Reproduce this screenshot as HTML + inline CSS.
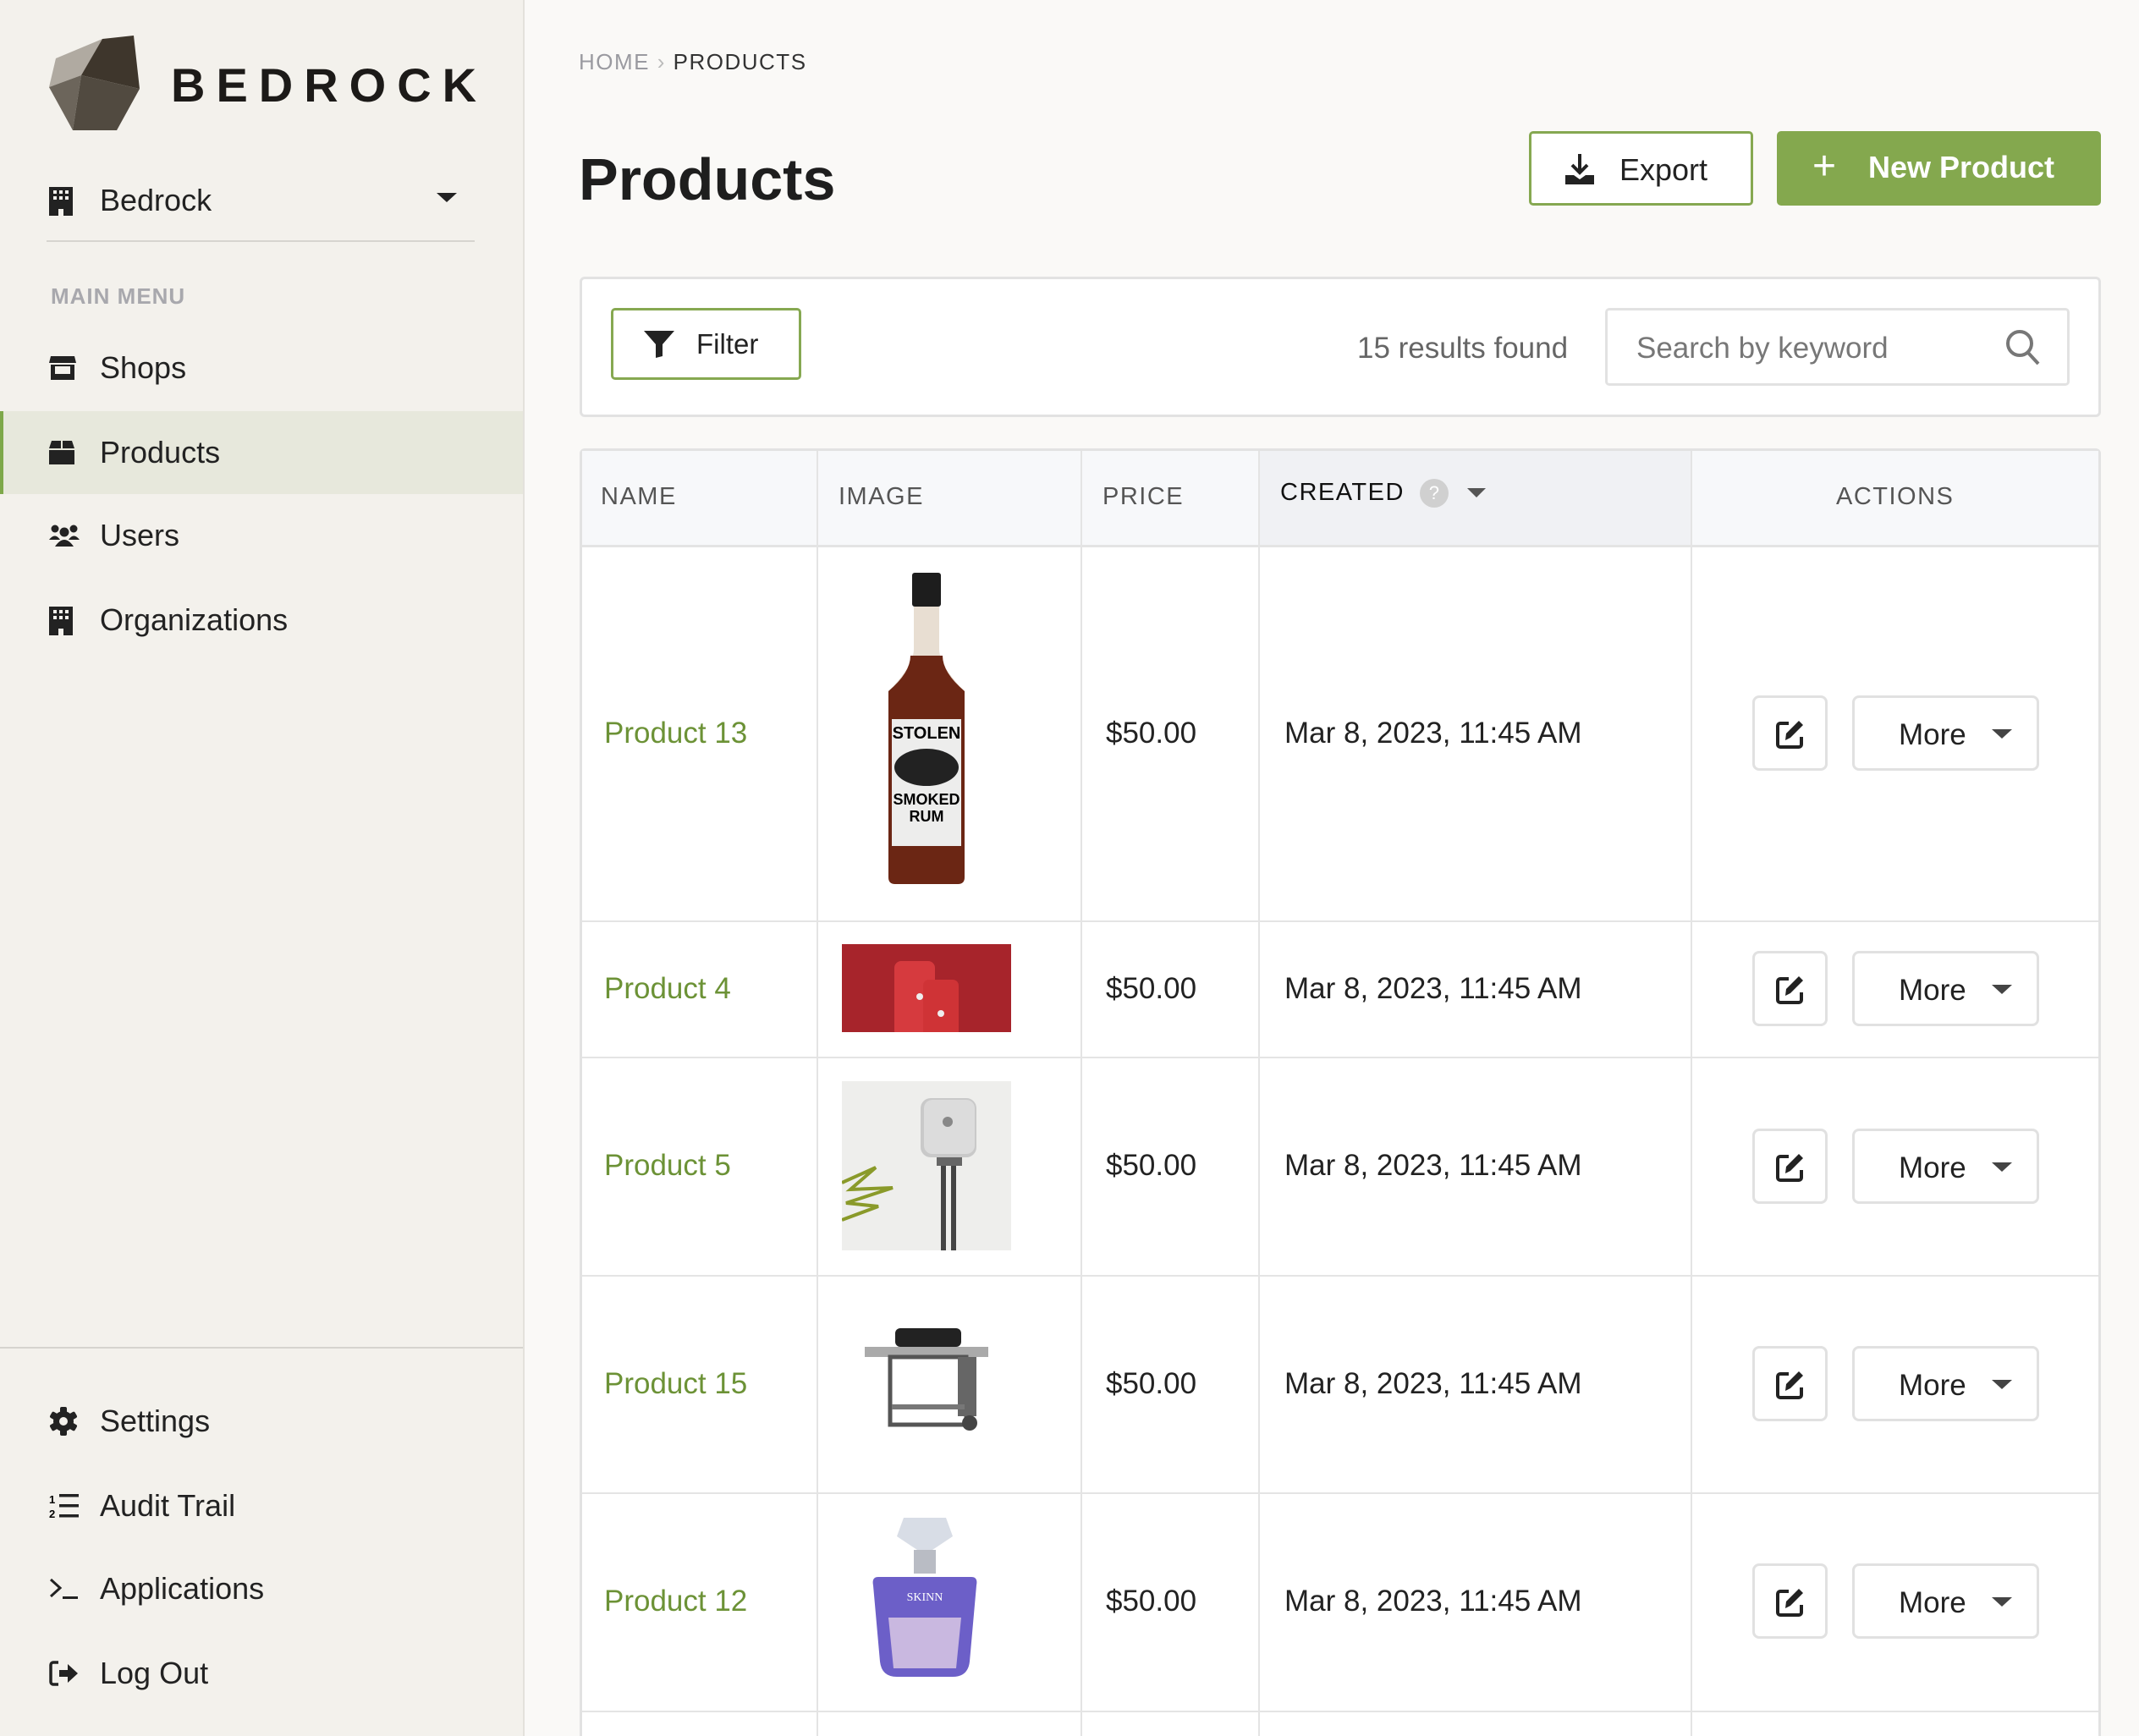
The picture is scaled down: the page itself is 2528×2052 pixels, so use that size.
<!DOCTYPE html>
<html style="overflow:hidden"><head><meta charset="utf-8"><style>
*{box-sizing:border-box;margin:0;padding:0}
html,body{width:2528px;height:2052px;overflow:hidden}
body{background:#faf9f7;font-family:"Liberation Sans",sans-serif;color:#222;position:relative}
.a{position:absolute}
#side{left:0;top:0;width:620px;height:2052px;background:#f3f1ec;border-right:2px solid #e3e1dc}
.mi{position:absolute;left:0;width:618px;height:98px;display:flex;align-items:center;font-size:36px;color:#222}
.mi svg{position:absolute;left:58px}
.mi span{position:absolute;left:118px}
.cell{position:absolute;display:flex;align-items:center}
.hl{position:absolute;background:#e4e4e4}
.name{color:#6c9236;font-size:35px;left:714px}
.price{left:1307px;font-size:35px}
.date{left:1518px;font-size:35px}
.eb{position:absolute;left:2071px;width:89px;height:89px;border:3px solid #e1e1e1;border-radius:8px;background:#fff;display:flex;align-items:center;justify-content:center}
.mb{position:absolute;left:2189px;width:221px;height:89px;border:3px solid #e1e1e1;border-radius:8px;background:#fff;font-size:35px}
.mb span{position:absolute;left:52px;top:24px}
.mb i{position:absolute;left:162px;top:37px;border-left:12px solid transparent;border-right:12px solid transparent;border-top:11px solid #444}
.th{position:absolute;top:530px;height:115px;display:flex;align-items:center;font-size:29px;letter-spacing:1.5px;color:#555}
</style></head><body>
<div id="side" class="a">
 <svg class="a" style="left:58px;top:42px" width="112" height="112" viewBox="0 0 112 112">
  <polygon points="8,27 63,4 38,47 0,61" fill="#b0aaa1"/>
  <polygon points="63,4 100,0 107,63 38,47" fill="#3e362c"/>
  <polygon points="0,61 38,47 28,112 " fill="#6c655b"/>
  <polygon points="38,47 107,63 80,112 28,112" fill="#514a40"/>
 </svg>
 <div class="a" style="left:202px;top:68px;font-size:56px;font-weight:bold;letter-spacing:13px;color:#1c1a18">BEDROCK</div>
 <div class="mi" style="top:188px"><svg width="28" height="36" viewBox="0 0 28 36"><path d="M0 2h28v34H17v-8h-6v8H0z" fill="#222"/><g fill="#f3f1ec"><rect x="5" y="6" width="4" height="4"/><rect x="12" y="6" width="4" height="4"/><rect x="19" y="6" width="4" height="4"/><rect x="5" y="13" width="4" height="4"/><rect x="12" y="13" width="4" height="4"/><rect x="19" y="13" width="4" height="4"/></g></svg><span>Bedrock</span>
  <i class="a" style="left:516px;top:40px;border-left:12px solid transparent;border-right:12px solid transparent;border-top:11px solid #222"></i></div>
 <div class="a" style="left:55px;top:284px;width:506px;height:2px;background:#d6d4cf"></div>
 <div class="a" style="left:60px;top:335px;font-size:26px;font-weight:bold;color:#a8a8ad;letter-spacing:1px">MAIN MENU</div>
 <div class="mi" style="top:386px"><svg width="32" height="28" viewBox="0 0 32 28"><path d="M2 0h28l2 8H0z M2 10h28v18H2z" fill="#222"/><rect x="7" y="12" width="18" height="9" fill="#f3f1ec"/></svg><span>Shops</span></div>
 <div class="mi" style="top:486px;background:#e7e8dc;border-left:4px solid #7ea84a"><svg width="30" height="28" viewBox="0 0 30 28" style="left:54px"><path d="M3 0h11v9H0z M16 0h11l3 9H16z M0 11h30v17H0z" fill="#222"/></svg><span style="left:114px">Products</span></div>
 <div class="mi" style="top:584px"><svg width="36" height="26" viewBox="0 0 36 26"><circle cx="7" cy="5" r="4.5" fill="#222"/><circle cx="29" cy="5" r="4.5" fill="#222"/><circle cx="18" cy="9" r="5.5" fill="#222"/><path d="M0 18q7-9 13 0z M23 18q6-9 13 0z M7 26q11-16 22 0z" fill="#222"/></svg><span>Users</span></div>
 <div class="mi" style="top:684px"><svg width="28" height="36" viewBox="0 0 28 36"><path d="M0 2h28v34H17v-8h-6v8H0z" fill="#222"/><g fill="#f3f1ec"><rect x="5" y="6" width="4" height="4"/><rect x="12" y="6" width="4" height="4"/><rect x="19" y="6" width="4" height="4"/><rect x="5" y="13" width="4" height="4"/><rect x="12" y="13" width="4" height="4"/><rect x="19" y="13" width="4" height="4"/></g></svg><span>Organizations</span></div>
 <div class="a" style="left:0;top:1592px;width:618px;height:2px;background:#d6d4cf"></div>
 <div class="mi" style="top:1631px"><svg width="34" height="34" viewBox="0 0 34 34"><g fill="#222"><circle cx="17" cy="17" r="12"/><rect x="13" y="0" width="8" height="34" rx="2"/><rect x="13" y="0" width="8" height="34" rx="2" transform="rotate(60 17 17)"/><rect x="13" y="0" width="8" height="34" rx="2" transform="rotate(120 17 17)"/></g><circle cx="17" cy="17" r="5" fill="#f3f1ec"/></svg><span>Settings</span></div>
 <div class="mi" style="top:1731px"><svg width="36" height="32" viewBox="0 0 36 32"><text x="0" y="13" font-size="13" font-weight="bold" font-family="Liberation Sans">1</text><text x="0" y="30" font-size="13" font-weight="bold" font-family="Liberation Sans">2</text><g fill="#222"><rect x="12" y="2" width="23" height="3.5"/><rect x="12" y="14" width="23" height="3.5"/><rect x="12" y="26" width="23" height="3.5"/></g></svg><span>Audit Trail</span></div>
 <div class="mi" style="top:1829px"><svg width="36" height="26" viewBox="0 0 36 26"><path d="M2 2l11 10L2 22" stroke="#222" stroke-width="3" fill="none"/><rect x="16" y="22" width="18" height="3" fill="#222"/></svg><span>Applications</span></div>
 <div class="mi" style="top:1929px"><svg width="36" height="30" viewBox="0 0 36 30"><path d="M11 2H5a3 3 0 0 0-3 3v20a3 3 0 0 0 3 3h6" stroke="#222" stroke-width="3.5" fill="none"/><path d="M12 11h10V4l12 11-12 11v-7H12z" fill="#222"/></svg><span>Log Out</span></div>
</div>

<div class="a" style="left:684px;top:58px;font-size:26px;letter-spacing:1.5px;color:#9a9aa0">HOME <span style="color:#bbb">›</span> <span style="color:#333">PRODUCTS</span></div>
<div class="a" style="left:684px;top:172px;font-size:70px;font-weight:bold;color:#1e1e1e">Products</div>

<div class="a" style="left:1807px;top:155px;width:265px;height:88px;border:3px solid #86a851;border-radius:5px;background:#fff;font-size:36px">
 <svg class="a" style="left:40px;top:24px" width="34" height="36" viewBox="0 0 34 36"><path d="M17 0v20" stroke="#222" stroke-width="4"/><path d="M8 13l9 9 9-9" stroke="#222" stroke-width="4" fill="none"/><path d="M0 25h10l7 5 7-5h10v11H0z" fill="#222"/></svg>
 <span class="a" style="left:104px;top:22px">Export</span></div>
<div class="a" style="left:2100px;top:155px;width:383px;height:88px;border-radius:5px;background:#84a84e;color:#fff;font-size:36px;font-weight:bold">
 <span class="a" style="left:42px;top:14px;font-size:48px;font-weight:normal">+</span>
 <span class="a" style="left:108px;top:22px">New Product</span></div>

<div class="a" style="left:685px;top:327px;width:1798px;height:166px;background:#fff;border:3px solid #e2e2e2;border-radius:6px"></div>
<div class="a" style="left:722px;top:364px;width:225px;height:85px;border:3px solid #86a851;border-radius:5px;background:#fff;font-size:33px">
 <svg class="a" style="left:36px;top:24px" width="36" height="32" viewBox="0 0 36 32"><path d="M0 0h36L22 16v14l-8 2V16z" fill="#222"/></svg>
 <span class="a" style="left:98px;top:21px">Filter</span></div>
<div class="a" style="left:1604px;top:392px;font-size:35px;color:#666">15 results found</div>
<div class="a" style="left:1897px;top:364px;width:549px;height:92px;border:3px solid #e2e2e2;border-radius:5px;background:#fff;font-size:35px;color:#777">
 <span class="a" style="left:34px;top:25px">Search by keyword</span>
 <svg class="a" style="left:470px;top:22px" width="42" height="44" viewBox="0 0 42 44"><circle cx="17" cy="17" r="14" stroke="#777" stroke-width="4" fill="none"/><path d="M27 28l12 13" stroke="#777" stroke-width="4"/></svg></div>

<!-- table -->
<div class="a" style="left:685px;top:530px;width:1798px;height:1600px;background:#fff;border:3px solid #e2e2e2;border-radius:6px"></div>
<div class="a" style="left:688px;top:533px;width:1792px;height:112px;background:#f7f8fa"></div>
<div class="a" style="left:1488px;top:533px;width:511px;height:112px;background:#f0f1f4"></div>
<div class="th" style="left:710px">NAME</div>
<div class="th" style="left:991px">IMAGE</div>
<div class="th" style="left:1303px">PRICE</div>
<div class="th" style="left:1513px;top:525px;color:#111">CREATED
 <span style="display:inline-block;width:34px;height:34px;border-radius:50%;background:#d0d0d0;color:#fff;font-size:22px;text-align:center;line-height:34px;margin-left:18px;letter-spacing:0">?</span>
 <i style="display:inline-block;margin-left:22px;border-left:11px solid transparent;border-right:11px solid transparent;border-top:11px solid #555"></i></div>
<div class="th" style="left:2170px">ACTIONS</div>
<div class="hl" style="left:688px;top:644px;width:1792px;height:3px"></div>
<div class="hl" style="left:965px;top:533px;width:2px;height:1519px"></div>
<div class="hl" style="left:1277px;top:533px;width:2px;height:1519px"></div>
<div class="hl" style="left:1487px;top:533px;width:2px;height:1519px"></div>
<div class="hl" style="left:1998px;top:533px;width:2px;height:1519px"></div>
<div class="hl" style="left:688px;top:1088px;width:1792px;height:2px"></div>
<div class="hl" style="left:688px;top:1249px;width:1792px;height:2px"></div>
<div class="hl" style="left:688px;top:1507px;width:1792px;height:2px"></div>
<div class="hl" style="left:688px;top:1764px;width:1792px;height:2px"></div>
<div class="hl" style="left:688px;top:2022px;width:1792px;height:2px"></div>

<!-- images -->
<svg class="a" style="left:1040px;top:675px" width="110" height="372" viewBox="0 0 110 372">
 <rect x="38" y="2" width="34" height="40" rx="3" fill="#1d1d1d"/>
 <path d="M40 42h30v50q0 20 30 50v220q0 8-8 8H18q-8 0-8-8V142q30-30 30-50z" fill="#e8ded2"/>
 <path d="M36 100h38q0 20 26 42v220q0 8-8 8H18q-8 0-8-8V142q26-22 26-42z" fill="#6b2614"/>
 <rect x="14" y="175" width="82" height="150" fill="#ededec"/>
 <text x="55" y="198" font-size="20" font-weight="bold" text-anchor="middle" font-family="Liberation Sans">STOLEN</text>
 <ellipse cx="55" cy="232" rx="38" ry="22" fill="#222"/>
 <text x="55" y="276" font-size="18" font-weight="bold" text-anchor="middle" font-family="Liberation Sans">SMOKED</text>
 <text x="55" y="296" font-size="18" font-weight="bold" text-anchor="middle" font-family="Liberation Sans">RUM</text>
</svg>
<svg class="a" style="left:995px;top:1116px" width="200" height="104" viewBox="0 0 200 104">
 <rect width="200" height="104" fill="#a7242b"/>
 <rect x="62" y="20" width="48" height="90" rx="8" fill="#d63a3e"/>
 <rect x="96" y="42" width="42" height="70" rx="7" fill="#cf3336"/>
 <circle cx="92" cy="62" r="4" fill="#eee"/><circle cx="117" cy="82" r="4" fill="#eee"/>
</svg>
<svg class="a" style="left:995px;top:1278px" width="200" height="200" viewBox="0 0 200 200">
 <rect width="200" height="200" fill="#eeeeec"/>
 <rect x="93" y="20" width="66" height="70" rx="12" fill="#c9c9c9"/>
 <rect x="97" y="22" width="60" height="64" rx="10" fill="#dcdcdc"/>
 <circle cx="125" cy="48" r="6" fill="#888"/>
 <rect x="112" y="90" width="30" height="10" fill="#666"/>
 <path d="M120 100v100M132 100v100" stroke="#444" stroke-width="6"/>
 <path d="M0 120l40-18-30 26 50-2-55 18 38 4-43 16" stroke="#8a9a2a" stroke-width="4" fill="none"/>
</svg>
<svg class="a" style="left:1022px;top:1570px" width="146" height="126" viewBox="0 0 146 126">
 <rect x="36" y="0" width="78" height="22" rx="6" fill="#222"/>
 <rect x="0" y="22" width="146" height="12" fill="#aaa"/>
 <rect x="30" y="34" width="90" height="80" fill="none" stroke="#555" stroke-width="5"/>
 <rect x="110" y="34" width="22" height="70" fill="#666"/>
 <rect x="32" y="90" width="86" height="6" fill="#777"/>
 <circle cx="124" cy="112" r="9" fill="#444"/>
</svg>
<svg class="a" style="left:1030px;top:1792px" width="126" height="192" viewBox="0 0 126 192">
 <path d="M38 2h50l8 22-33 22-33-22z" fill="#d8dde6"/>
 <rect x="50" y="40" width="26" height="28" fill="#b9bcc4"/>
 <path d="M8 72h110q8 0 6 10l-8 90q-2 18-20 18H30q-18 0-20-18L2 82q-2-10 6-10z" fill="#6c5fc8"/>
 <path d="M20 120h86l-6 60H26z" fill="#c9b8e0"/>
 <text x="63" y="100" font-size="14" fill="#fff" text-anchor="middle" font-family="Liberation Serif">SKINN</text>
</svg>

<!-- rows -->
<div class="cell name" style="top:645px;height:443px">Product 13</div>
<div class="cell name" style="top:1088px;height:161px">Product 4</div>
<div class="cell name" style="top:1249px;height:258px">Product 5</div>
<div class="cell name" style="top:1507px;height:257px">Product 15</div>
<div class="cell name" style="top:1764px;height:258px">Product 12</div>

<div class="cell price" style="top:645px;height:443px">$50.00</div>
<div class="cell price" style="top:1088px;height:161px">$50.00</div>
<div class="cell price" style="top:1249px;height:258px">$50.00</div>
<div class="cell price" style="top:1507px;height:257px">$50.00</div>
<div class="cell price" style="top:1764px;height:258px">$50.00</div>

<div class="cell date" style="top:645px;height:443px">Mar 8, 2023, 11:45 AM</div>
<div class="cell date" style="top:1088px;height:161px">Mar 8, 2023, 11:45 AM</div>
<div class="cell date" style="top:1249px;height:258px">Mar 8, 2023, 11:45 AM</div>
<div class="cell date" style="top:1507px;height:257px">Mar 8, 2023, 11:45 AM</div>
<div class="cell date" style="top:1764px;height:258px">Mar 8, 2023, 11:45 AM</div>

<svg width="0" height="0" style="position:absolute"><defs><symbol id="ed" viewBox="0 0 36 36"><path d="M16 6H6a3 3 0 0 0-3 3v22a3 3 0 0 0 3 3h22a3 3 0 0 0 3-3V22" stroke="#222" stroke-width="4" fill="none"/><path d="M12 26l1-8L28 3l5 5-15 15z" fill="#222"/></symbol></defs></svg>

<div class="eb" style="top:822px"><svg width="36" height="36"><use href="#ed"/></svg></div>
<div class="mb" style="top:822px"><span>More</span><i></i></div>
<div class="eb" style="top:1124px"><svg width="36" height="36"><use href="#ed"/></svg></div>
<div class="mb" style="top:1124px"><span>More</span><i></i></div>
<div class="eb" style="top:1334px"><svg width="36" height="36"><use href="#ed"/></svg></div>
<div class="mb" style="top:1334px"><span>More</span><i></i></div>
<div class="eb" style="top:1591px"><svg width="36" height="36"><use href="#ed"/></svg></div>
<div class="mb" style="top:1591px"><span>More</span><i></i></div>
<div class="eb" style="top:1848px"><svg width="36" height="36"><use href="#ed"/></svg></div>
<div class="mb" style="top:1848px"><span>More</span><i></i></div>
</body></html>
